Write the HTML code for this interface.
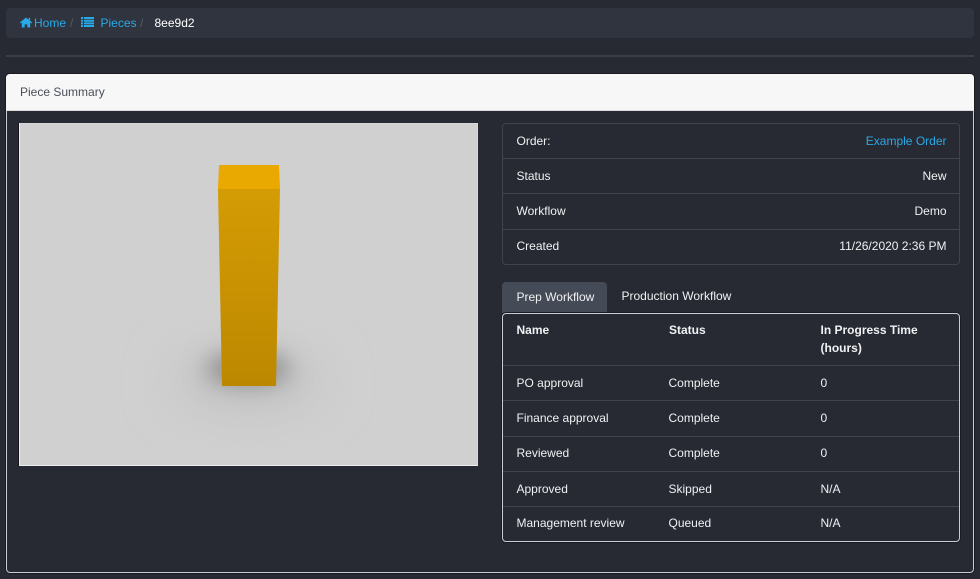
<!DOCTYPE html>
<html><head><meta charset="utf-8">
<style>
*{box-sizing:border-box}
html,body{margin:0;padding:0;width:980px;height:579px;overflow:hidden;background:#272a33;font-family:"Liberation Sans",sans-serif;font-size:12px;color:#e6e8ec}
.a{position:absolute;white-space:nowrap;line-height:15px}
.bc{position:absolute;left:6px;top:8px;width:968px;height:30px;background:#2f343f;border-radius:4px}
.hr{position:absolute;left:6px;top:55px;width:968px;height:2px;background:#3a3e47}
.panel{position:absolute;left:6px;top:74px;width:968px;height:499px;border:1px solid #c9ccd2;border-radius:4px;background:#272a33;box-shadow:0 0 0 1px #1a1c22}
.phead{position:absolute;left:6px;top:74px;width:968px;height:37px;background:#f7f7f7;border-radius:4px 4px 0 0;border-bottom:1px solid #ddd;color:#4a4f58;padding:11px 14px;line-height:15px;font-size:12px}
.img{position:absolute;left:19px;top:123px;width:459px;height:343px;border:1px solid #eee;border-top-color:#d8d8d8;border-right-color:#d8d8d8;background:#cfcfcf;overflow:hidden;box-shadow:-1px 0 0 #14161b}
.list{position:absolute;left:502px;top:123px;width:458px;height:142px;border:1px solid #3f434d;border-radius:4px}
.sep{position:absolute;height:1px;background:#40444d}
.tab{position:absolute;left:502px;top:282px;width:105px;height:31px;background:#454a57;border-radius:4px 4px 0 0}
.tbl{position:absolute;left:502px;top:313px;width:458px;height:229px;border:1px solid #c9ccd2;border-radius:4px;box-shadow:0 0 0 1px #1a1c22}
.w{color:#f0f1f3}
.b{color:#29a9e6}
.th{font-weight:bold;color:#f0f1f3}
</style></head><body>
<div class="bc"></div>
<svg class="a" style="left:19px;top:17px" width="14" height="11" viewBox="0 0 14 12"><path d="M7 0.5 L0.3 6 L1.1 7 L2.4 6 V11.5 H5.6 V8 H8.4 V11.5 H11.6 V6 L12.9 7 L13.7 6 L11.5 4.2 V1 H10 V3 Z" fill="#29a9e6"/></svg>
<div class="a b" style="left:34px;top:16px">Home</div>
<div class="a" style="left:70px;top:16px;color:#555b68">/</div>
<svg class="a" style="left:81px;top:17px" width="13" height="10" viewBox="0 0 13 10"><path d="M0 0h2v2H0zM3 0h10v2H3zM0 2.7h2v2H0zM3 2.7h10v2H3zM0 5.4h2v2H0zM3 5.4h10v2H3zM0 8h2v2H0zM3 8h10v2H3z" fill="#29a9e6"/></svg>
<div class="a b" style="left:100.5px;top:16px">Pieces</div>
<div class="a" style="left:140px;top:16px;color:#555b68">/</div>
<div class="a" style="left:154.5px;top:16px;color:#fff">8ee9d2</div>
<div class="hr"></div>
<div class="panel"></div>
<div class="phead">Piece Summary</div>
<div class="img">
<svg width="457" height="341" viewBox="0 0 457 341" style="display:block">
<defs>
<filter id="bl" x="-100%" y="-150%" width="300%" height="400%"><feGaussianBlur stdDeviation="12"/></filter>
<filter id="bw" x="-100%" y="-150%" width="300%" height="400%"><feGaussianBlur stdDeviation="25"/></filter>
<linearGradient id="f" x1="0" y1="0" x2="0" y2="1"><stop offset="0" stop-color="#d49c04"/><stop offset="1" stop-color="#bc8800"/></linearGradient>
</defs>
<rect width="457" height="341" fill="#d0d0d0"/>
<ellipse cx="228" cy="258" rx="75" ry="28" fill="#c2c2c2" filter="url(#bw)"/>
<ellipse cx="228" cy="245" rx="42" ry="15" fill="#858585" filter="url(#bl)"/>
<polygon points="199,41 259,41 260,65 198,65" fill="#e9a901"/>
<polygon points="198,65 260,65 256,262 202,262" fill="url(#f)"/>
</svg>
</div>
<div class="list"></div>
<div class="sep" style="left:503px;top:158px;width:456px"></div>
<div class="sep" style="left:503px;top:193px;width:456px"></div>
<div class="sep" style="left:503px;top:229px;width:456px"></div>
<div class="a w" style="left:516.5px;top:134px">Order:</div>
<div class="a b" style="right:33.5px;top:134px">Example Order</div>
<div class="a w" style="left:516.5px;top:169px">Status</div>
<div class="a w" style="right:33.5px;top:169px">New</div>
<div class="a w" style="left:516.5px;top:204px">Workflow</div>
<div class="a w" style="right:33.5px;top:204px">Demo</div>
<div class="a w" style="left:516.5px;top:239px">Created</div>
<div class="a w" style="right:33.5px;top:239px">11/26/2020 2:36 PM</div>
<div class="tab"></div>
<div class="a w" style="left:516.5px;top:290px">Prep Workflow</div>
<div class="a w" style="left:621.5px;top:289px">Production Workflow</div>
<div class="tbl"></div>
<div class="a th" style="left:516.5px;top:323px">Name</div>
<div class="a th" style="left:669px;top:323px">Status</div>
<div class="a th" style="left:820.5px;top:323px">In Progress Time</div>
<div class="a th" style="left:820.5px;top:341px">(hours)</div>
<div class="sep" style="left:503px;top:365px;width:456px"></div>
<div class="sep" style="left:503px;top:400px;width:456px"></div>
<div class="sep" style="left:503px;top:436px;width:456px"></div>
<div class="sep" style="left:503px;top:471px;width:456px"></div>
<div class="sep" style="left:503px;top:506px;width:456px"></div>
<div class="a w" style="left:516.5px;top:376px">PO approval</div><div class="a w" style="left:668.5px;top:376px">Complete</div><div class="a w" style="left:820.5px;top:376px">0</div>
<div class="a w" style="left:516.5px;top:411px">Finance approval</div><div class="a w" style="left:668.5px;top:411px">Complete</div><div class="a w" style="left:820.5px;top:411px">0</div>
<div class="a w" style="left:516.5px;top:446px">Reviewed</div><div class="a w" style="left:668.5px;top:446px">Complete</div><div class="a w" style="left:820.5px;top:446px">0</div>
<div class="a w" style="left:516.5px;top:482px">Approved</div><div class="a w" style="left:668.5px;top:482px">Skipped</div><div class="a w" style="left:820.5px;top:482px">N/A</div>
<div class="a w" style="left:516.5px;top:516px">Management review</div><div class="a w" style="left:668.5px;top:516px">Queued</div><div class="a w" style="left:820.5px;top:516px">N/A</div>
</body></html>
